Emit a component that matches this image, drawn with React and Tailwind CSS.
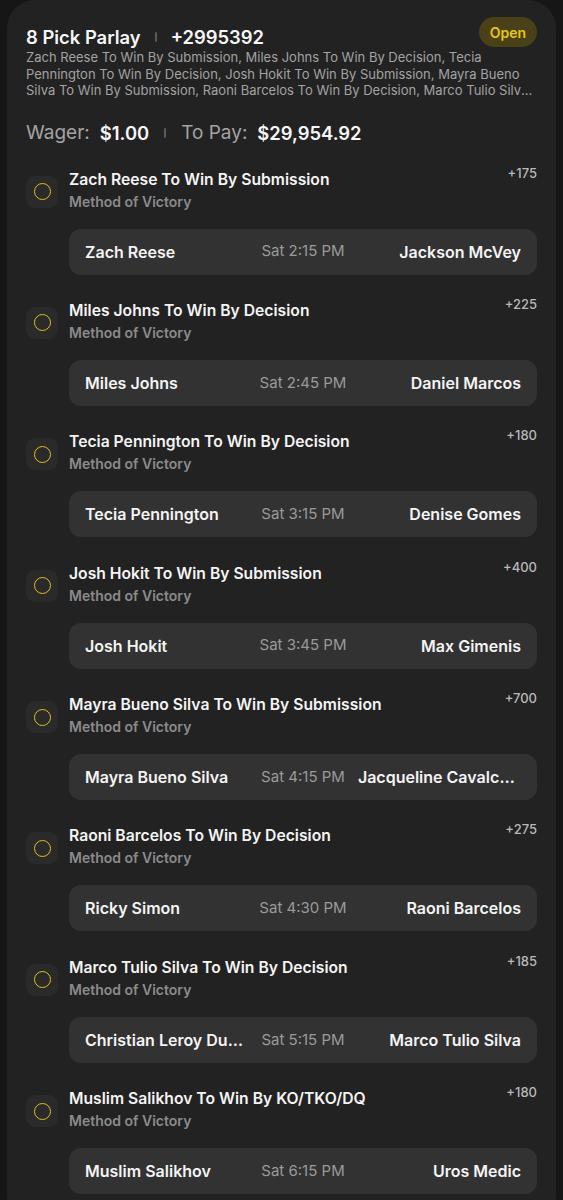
const LEGS = [
  { pick: "Zach Reese To Win By Submission", odds: "+175", left: "Zach Reese", time: "Sat 2:15 PM", right: "Jackson McVey" },
  { pick: "Miles Johns To Win By Decision", odds: "+225", left: "Miles Johns", time: "Sat 2:45 PM", right: "Daniel Marcos" },
  { pick: "Tecia Pennington To Win By Decision", odds: "+180", left: "Tecia Pennington", time: "Sat 3:15 PM", right: "Denise Gomes" },
  { pick: "Josh Hokit To Win By Submission", odds: "+400", left: "Josh Hokit", time: "Sat 3:45 PM", right: "Max Gimenis" },
  { pick: "Mayra Bueno Silva To Win By Submission", odds: "+700", left: "Mayra Bueno Silva", time: "Sat 4:15 PM", right: "Jacqueline Cavalcanti" },
  { pick: "Raoni Barcelos To Win By Decision", odds: "+275", left: "Ricky Simon", time: "Sat 4:30 PM", right: "Raoni Barcelos" },
  { pick: "Marco Tulio Silva To Win By Decision", odds: "+185", left: "Christian Leroy Duncan", time: "Sat 5:15 PM", right: "Marco Tulio Silva" },
  { pick: "Muslim Salikhov To Win By KO/TKO/DQ", odds: "+180", left: "Muslim Salikhov", time: "Sat 6:15 PM", right: "Uros Medic" },
];

const DESCRIPTION = LEGS.map((l) => l.pick).join(", ");

function Divider() {
  return <span className="inline-block h-[10px] w-[2px] rounded-full bg-[#5a5a5a]" />;
}

function Leg({ leg }) {
  return (
    <div>
      <div className="flex items-start">
        <div className="mt-[11px] flex h-[32px] w-[32px] shrink-0 items-center justify-center rounded-[9px] bg-[#2a2a2a]">
          <span className="h-[17px] w-[17px] rounded-full border-[1.5px] border-[#e2bf1c]" />
        </div>
        <div className="ml-[11px] flex-1 pt-[4px]">
          <div className="text-[15.7px] leading-[22px] font-semibold text-[#f4f4f4]">{leg.pick}</div>
          <div className="text-[14px] leading-[22px] font-semibold text-[#8b8b8b]">Method of Victory</div>
        </div>
        <div className="text-[13px] leading-[16px] font-medium text-[#b8b8b8]">{leg.odds}</div>
      </div>
      <div className="mt-[16px] ml-[43px] grid h-[46px] grid-cols-[1fr_auto_1fr] items-center gap-[13px] rounded-[12px] bg-[#323232] px-[16px]">
        <div className="truncate text-[16px] font-semibold text-[#f4f4f4]">{leg.left}</div>
        <div className="text-[15px] text-[#9a9a9a]">{leg.time}</div>
        <div className="truncate text-right text-[16px] font-semibold text-[#f4f4f4]">{leg.right}</div>
      </div>
    </div>
  );
}

export default function App() {
  return (
    <div className="min-h-screen bg-[#161616] px-[7px] font-['Inter',sans-serif]">
      <div className="rounded-[28px] bg-[#222222] px-[19px] pt-[17px] pb-[30px]">
        <div className="flex items-start justify-between">
          <div className="mt-[8px] flex items-center gap-[14px] text-[18.4px] leading-[24px] font-semibold text-[#f6f6f6]">
            <span>8 Pick Parlay</span>
            <Divider />
            <span>+2995392</span>
          </div>
          <div className="flex h-[30px] items-center rounded-full bg-[#4a4118] px-[11px] text-[14px] font-semibold text-[#e8c41c]">
            Open
          </div>
        </div>
        <p className="line-clamp-3 pr-[2px] text-[13px] leading-[16.5px] text-[#a3a3a3]">{DESCRIPTION}</p>
        <div className="mt-[22px] flex items-center text-[19px] leading-[24px]">
          <span className="text-[#a3a3a3]">Wager:</span>
          <span className="ml-[10px] text-[18.4px] font-semibold text-[#f6f6f6]">$1.00</span>
          <span className="mx-[15px] flex items-center"><Divider /></span>
          <span className="text-[#a3a3a3]">To Pay:</span>
          <span className="ml-[10px] text-[18.4px] font-semibold text-[#f6f6f6]">$29,954.92</span>
        </div>
        <div className="mt-[20px] flex flex-col gap-[21.4px]">
          {LEGS.map((leg) => (
            <Leg key={leg.pick} leg={leg} />
          ))}
        </div>
      </div>
    </div>
  );
}
